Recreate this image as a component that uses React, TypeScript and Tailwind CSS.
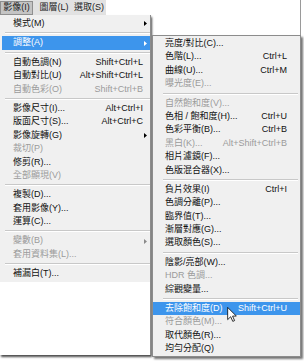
import React from "react";

type Item = {
  label?: string;
  shortcut?: string;
  disabled?: boolean;
  arrow?: boolean;
  active?: boolean;
  sep?: boolean;
};

const mainItems: Item[] = [
  { label: "模式(M)", arrow: true },
  { sep: true },
  { label: "調整(A)", arrow: true, active: true },
  { sep: true },
  { label: "自動色調(N)", shortcut: "Shift+Ctrl+L" },
  { label: "自動對比(U)", shortcut: "Alt+Shift+Ctrl+L" },
  { label: "自動色彩(O)", shortcut: "Shift+Ctrl+B", disabled: true },
  { sep: true },
  { label: "影像尺寸(I)...", shortcut: "Alt+Ctrl+I" },
  { label: "版面尺寸(S)...", shortcut: "Alt+Ctrl+C" },
  { label: "影像旋轉(G)", arrow: true },
  { label: "裁切(P)", disabled: true },
  { label: "修剪(R)..." },
  { label: "全部顯現(V)", disabled: true },
  { sep: true },
  { label: "複製(D)..." },
  { label: "套用影像(Y)..." },
  { label: "運算(C)..." },
  { sep: true },
  { label: "變數(B)", arrow: true, disabled: true },
  { label: "套用資料集(L)...", disabled: true },
  { sep: true },
  { label: "補漏白(T)..." },
];

const subItems: Item[] = [
  { label: "亮度/對比(C)..." },
  { label: "色階(L)...", shortcut: "Ctrl+L" },
  { label: "曲線(U)...", shortcut: "Ctrl+M" },
  { label: "曝光度(E)...", disabled: true },
  { sep: true },
  { label: "自然飽和度(V)...", disabled: true },
  { label: "色相 / 飽和度(H)...", shortcut: "Ctrl+U" },
  { label: "色彩平衡(B)...", shortcut: "Ctrl+B" },
  { label: "黑白(K)...", shortcut: "Alt+Shift+Ctrl+B", disabled: true },
  { label: "相片濾鏡(F)..." },
  { label: "色版混合器(X)..." },
  { sep: true },
  { label: "負片效果(I)", shortcut: "Ctrl+I" },
  { label: "色調分離(P)..." },
  { label: "臨界值(T)..." },
  { label: "漸層對應(G)..." },
  { label: "選取顏色(S)..." },
  { sep: true },
  { label: "陰影/亮部(W)..." },
  { label: "HDR 色調...", disabled: true },
  { label: "綜觀變量..." },
  { sep: true },
  { label: "去除飽和度(D)", shortcut: "Shift+Ctrl+U", active: true },
  { label: "符合顏色(M)...", disabled: true },
  { label: "取代顏色(R)..." },
  { label: "均勻分配(Q)" },
];

function Arrow({ color }: { color: string }) {
  return (
    <svg width="3" height="5" viewBox="0 0 3 5">
      <path d="M0 0 L3 2.5 L0 5 Z" fill={color} />
    </svg>
  );
}

function Row({ item, sub }: { item: Item; sub?: boolean }) {
  if (item.sep) {
    return (
      <div className={sub ? "py-[2px] ml-[10px] mr-[2px]" : "py-[2px] ml-[3px]"}>
        <div className="h-px bg-[#c8c8c8]" />
        <div className="h-px bg-white" />
      </div>
    );
  }
  const text = item.active
    ? "text-white"
    : item.disabled
      ? "text-[#9b9b9b]"
      : "text-[#111]";
  return (
    <div
      className={`flex items-center h-[13.4px] ${
        item.active ? "bg-[#3d95ec]" : ""
      } ${sub ? "pl-[12px] pr-[13px]" : "pl-[11px] pr-[2px]"} ${text}`}
    >
      <span className="whitespace-nowrap">{item.label}</span>
      {item.shortcut && (
        <span className="ml-auto whitespace-nowrap">{item.shortcut}</span>
      )}
      {!sub && (
        <span className={`w-[5px] flex justify-center ${item.shortcut ? "" : "ml-auto"}`}>
          {item.arrow && (
            <Arrow
              color={item.active ? "#fff" : item.disabled ? "#8a8a8a" : "#000"}
            />
          )}
        </span>
      )}
    </div>
  );
}

export default function App() {
  return (
    <div
      className="relative w-[304px] h-[361px] bg-white overflow-hidden text-[9px] leading-[13.4px]"
      style={{ fontFamily: '"Liberation Sans", "Noto Sans CJK TC", sans-serif' }}
    >
      {/* menu bar */}
      <div className="flex items-center h-[15px] w-[106px] bg-[#e2e2e2] text-[#222]">
        <div className="h-[14px] w-[33px] flex items-center justify-center bg-[#c4c4c4] border border-[#8f8f8f]">
          影像(I)
        </div>
        <div className="ml-[6px] w-[30px] text-center">圖層(L)</div>
        <div className="ml-[5px] w-[30px] text-center">選取(S)</div>
      </div>
      <div className="absolute right-[3px] top-0 h-[36px] w-px bg-[#9a9a9a]" />

      {/* main menu */}
      <div className="flex flex-col w-[151px] h-[340px] border-r border-[#8c8c8c] shadow-[1px_2px_2px_rgba(0,0,0,0.7)]">
        <div className="bg-[#f0f0f0] pt-[2px] pb-px pl-[2px]">
          {mainItems.map((it, i) => (
            <Row key={i} item={it} />
          ))}
        </div>
        <div className="flex-1 bg-white" />
      </div>

      {/* adjustments submenu */}
      <div className="absolute left-[152px] top-[35px] w-[149px] h-[322px] bg-[#f0f0f0] border border-[#8c8c8c] pt-px shadow-[2px_2px_2px_rgba(0,0,0,0.55)]">
        {subItems.map((it, i) => (
          <Row key={i} item={it} sub />
        ))}
      </div>

      {/* mouse pointer */}
      <svg
        className="absolute left-[227px] top-[307px]"
        width="10"
        height="15"
        viewBox="0 0 12 19"
      >
        <path
          d="M0.5 0.5 L0.5 16 L4.3 12.3 L7 18.2 L9.3 17.2 L6.7 11.5 L11.5 11.5 Z"
          fill="#fff"
          stroke="#000"
          strokeWidth="1"
          strokeLinejoin="round"
        />
      </svg>
    </div>
  );
}
